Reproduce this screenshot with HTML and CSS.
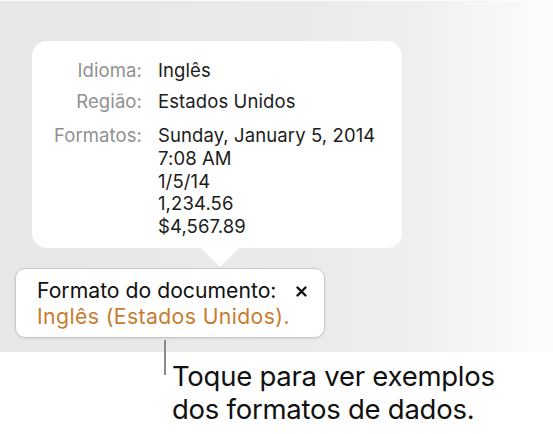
FILE: index.html
```html
<!DOCTYPE html>
<html lang="pt">
<head>
<meta charset="utf-8">
<link rel="stylesheet" href="styles.css">
</head>
<body>
<div class="stage">
  <div class="card">
    <div class="grid">
      <div class="label">Idioma:</div>
      <div class="value">Inglês</div>
      <div class="label">Região:</div>
      <div class="value">Estados Unidos</div>
      <div class="label formats">Formatos:</div>
      <div class="value formats">Sunday, January 5, 2014<br>7:08 AM<br>1/5/14<br>1,234.56<br>$4,567.89</div>
    </div>
  </div>
  <div class="bubble">
    <div class="bubble-row">
      <span class="bubble-title">Formato do documento:</span>
      <svg class="close" width="11" height="11" viewBox="0 0 11 11"><path d="M1.5 1.5 L9.5 9.5 M9.5 1.5 L1.5 9.5" stroke="#111" stroke-width="2.4" stroke-linecap="round"/></svg>
    </div>
    <div class="bubble-link">Inglês (Estados Unidos).</div>
  </div>
</div>
<div class="callout">
  <div class="callout-line"></div>
  <div class="callout-text">Toque para ver exemplos<br>dos formatos de dados.</div>
</div>
</body>
</html>
```
FILE: styles.css
```css
html, body {
  margin: 0;
  padding: 0;
}
body {
  width: 553px;
  height: 434px;
  overflow: hidden;
  background: #ffffff;
  font-family: "Inter", "Liberation Sans", sans-serif;
  color: #1a1a1a;
}
.stage {
  height: 352px;
  box-sizing: border-box;
  padding-top: 41px;
  border-top: 1px solid #fbfbfb;
  background: linear-gradient(90deg, #e7e7e7 0%, #eaeaea 55%, #efefef 75%, #f7f7f7 90%, #fcfcfc 100%);
}
.card {
  position: relative;
  margin-left: 32px;
  width: 370px;
  height: 207px;
  margin-top: -1px;
  box-sizing: border-box;
  border-radius: 15px;
  background: #ffffff;
  padding-top: 17.5px;
}
.card::after {
  content: "";
  position: absolute;
  left: 168px;
  top: 206px;
  width: 0;
  height: 0;
  border-left: 20px solid transparent;
  border-right: 20px solid transparent;
  border-top: 20px solid #ffffff;
}
.grid {
  display: grid;
  grid-template-columns: 110px 1fr;
  column-gap: 16px;
  row-gap: 8.3px;
  font-size: 18.5px;
  line-height: 22.7px;
  letter-spacing: 0.1px;
}
.label {
  text-align: right;
  color: #909090;
}
.value {
  color: #1c1c1c;
}
.formats {
  margin-top: 3.6px;
}
.bubble {
  margin-left: 15px;
  margin-top: 20px;
  width: 310px;
  height: 70px;
  box-sizing: border-box;
  border: 1px solid #c8c8c8;
  border-radius: 10px;
  background: #ffffff;
  box-shadow: 0 1px 2px rgba(0, 0, 0, 0.08);
  padding: 8.3px 0 0 21px;
  font-size: 21.2px;
  line-height: 26px;
}
.bubble-row {
  display: flex;
  align-items: center;
}
.bubble-title {
  color: #111111;
}
.close {
  margin-left: 20px;
  margin-top: 2px;
}
.bubble-link {
  color: #c97b2d;
  letter-spacing: 0.4px;
}
.callout {
  display: flex;
  margin-top: -12px;
  margin-left: 164px;
}
.callout-line {
  width: 2px;
  height: 35px;
  background: #8a8a8a;
}
.callout-text {
  margin-left: 6px;
  padding-top: 19.5px;
  font-size: 27.5px;
  line-height: 33px;
  letter-spacing: -0.25px;
  color: #111111;
}
```
